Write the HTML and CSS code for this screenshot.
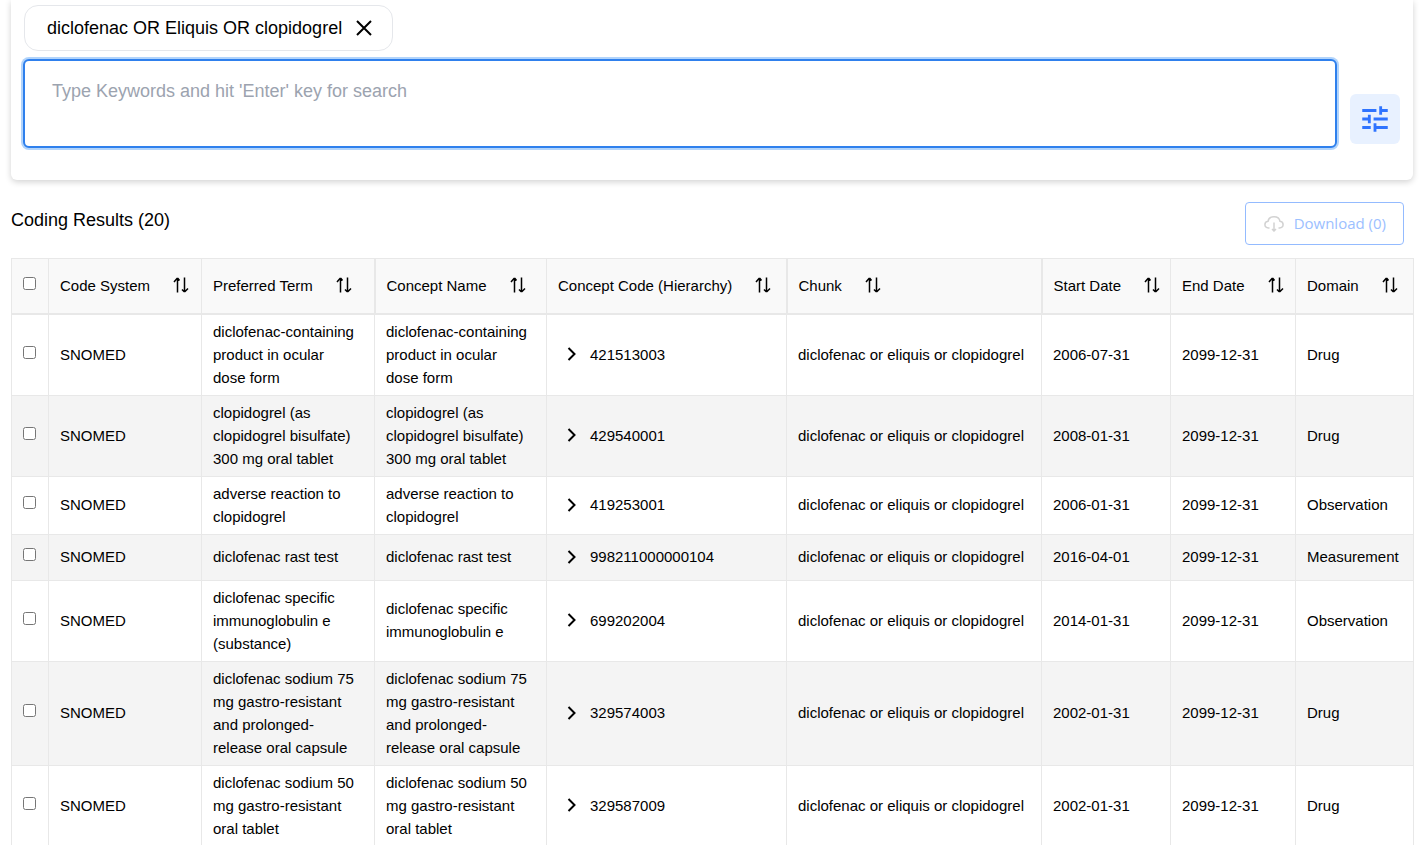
FILE: index.html
```html
<!DOCTYPE html>
<html lang="en">
<head>
  <meta charset="UTF-8">
  <title>Coding Results</title>
  <link rel="stylesheet" href="styles.css">
</head>
<body>

  <svg class="sprite" aria-hidden="true">
    <symbol id="sort" viewBox="0 0 16 16">
      <path d="M4.500 15.500V1.500M1 5 4 1.500H5L6.500 3.500M11.500 .5V14.500M9 12.500 11 14.500H12L15 11.500"/>
    </symbol>
    <symbol id="chevron" viewBox="0 0 10 16">
      <path d="M1.500 2 7.500 8 1.500 14"/>
    </symbol>
  </svg>

  <section class="search-card">
    <div class="chip">
      <span>diclofenac OR Eliquis OR clopidogrel</span>
      <button class="chip-close" aria-label="Remove">
        <svg viewBox="0 0 16 16" width="16" height="16"><path d="M1 1 15 15M15 1 1 15"/></svg>
      </button>
    </div>
    <div class="search-row">
      <textarea class="search-box" aria-label="Keywords" placeholder="Type Keywords and hit 'Enter' key for search"></textarea>
      <button class="filter-btn" aria-label="Filters">
        <svg viewBox="0 0 24 24" width="34" height="34"><path d="M3 17v2h6v-2H3zM3 5v2h10V5H3zm10 16v-2h8v-2h-8v-2h-2v6h2zM7 9v2H3v2h4v2h2V9H7zm14 4v-2H11v2h10zm-6-4h2V7h4V5h-4V3h-2v6z"/></svg>
      </button>
    </div>
  </section>

  <div class="results-bar">
    <h2>Coding Results (20)</h2>
    <button class="download-btn" disabled>
      <svg viewBox="0 0 20 16" width="20" height="16"><path d="M5.500 12H4.500C-.2 11.800-.2 6 4 5.300 5-.7 15-.7 16 5.300 20.200 6 20.200 11.800 15.500 12H14.500M10 6.500V15M8 13 10 15 12 13"/></svg>
      Download (0)
    </button>
  </div>

  <table class="results">
    <colgroup>
      <col class="col-check">
      <col class="col-system">
      <col class="col-term">
      <col class="col-name">
      <col class="col-code">
      <col class="col-chunk">
      <col class="col-start">
      <col class="col-end">
      <col class="col-domain">
    </colgroup>
    <thead>
      <tr>
        <th class="check"><input type="checkbox" aria-label="Select all"></th>
        <th><div class="head">Code System <button aria-label="Sort"><svg><use href="#sort"/></svg></button></div></th>
        <th><div class="head">Preferred Term <button aria-label="Sort"><svg><use href="#sort"/></svg></button></div></th>
        <th class="group"><div class="head">Concept Name <button aria-label="Sort"><svg><use href="#sort"/></svg></button></div></th>
        <th><div class="head">Concept Code (Hierarchy) <button aria-label="Sort"><svg><use href="#sort"/></svg></button></div></th>
        <th class="group"><div class="head">Chunk <button aria-label="Sort"><svg><use href="#sort"/></svg></button></div></th>
        <th class="group"><div class="head">Start Date <button aria-label="Sort"><svg><use href="#sort"/></svg></button></div></th>
        <th><div class="head">End Date <button aria-label="Sort"><svg><use href="#sort"/></svg></button></div></th>
        <th><div class="head">Domain <button aria-label="Sort"><svg><use href="#sort"/></svg></button></div></th>
      </tr>
    </thead>
    <tbody id="rows"></tbody>
  </table>

  <script src="script.js"></script>
</body>
</html>
```

FILE: styles.css
```css
* {
  box-sizing: border-box;
}

body {
  margin: 0;
  padding: 0 8px 0 11px;
  font-family: "Liberation Sans", Arial, sans-serif;
  font-size: 15px;
  line-height: 23px;
  color: #000;
  background: #fff;
}

button {
  padding: 0;
  border: none;
  background: none;
  color: inherit;
  font: inherit;
  cursor: pointer;
}

svg {
  display: block;
}

.sprite {
  display: none;
}

/* Search card */
.search-card {
  padding: 5px 13px 32px 12px;
  border-radius: 0 0 6px 6px;
  box-shadow: 0 2px 6px rgba(0, 0, 0, 0.18);
}

.chip {
  display: inline-flex;
  align-items: center;
  gap: 14px;
  height: 46px;
  margin-left: 1px;
  padding: 0 20px 0 22px;
  border: 1px solid #e5e7eb;
  border-radius: 14px;
  font-size: 18px;
}

.chip-close svg {
  fill: none;
  stroke: #000;
  stroke-width: 2;
}

.search-row {
  display: flex;
  align-items: flex-end;
  gap: 13px;
  margin-top: 8px;
}

.search-box {
  flex: 1;
  height: 89px;
  padding: 18px 27px;
  border: 2px solid #2f80ed;
  border-radius: 6px;
  outline: none;
  box-shadow: 0 0 0 2px #b2d4fb;
  resize: none;
  font-family: inherit;
  font-size: 18px;
  line-height: 24px;
}

.search-box::placeholder {
  color: #9ca3af;
}

.filter-btn {
  display: flex;
  align-items: center;
  justify-content: center;
  width: 50px;
  height: 50px;
  margin-bottom: 4px;
  border-radius: 6px;
  background: #e8f1ff;
}

.filter-btn svg {
  fill: #2f74ff;
}

/* Title and download */
.results-bar {
  display: flex;
  justify-content: space-between;
  align-items: flex-start;
  padding: 22px 9px 13px 0;
}

h2 {
  margin: 6px 0 0;
  font-size: 18px;
  line-height: 24px;
  font-weight: normal;
}

.download-btn {
  display: flex;
  align-items: center;
  gap: 10px;
  height: 43px;
  padding: 0 17px 0 18px;
  border: 1px solid #94bbff;
  border-radius: 4px;
  color: #9cc0ff;
  font-family: "Open Sans", "Noto Sans", sans-serif;
}

.download-btn svg {
  fill: none;
  stroke: #d2d2d2;
  stroke-width: 1.5;
}

/* Results table */
.results {
  width: 100%;
  table-layout: fixed;
  border-collapse: collapse;
}

.col-check { width: 37px; }
.col-system { width: 153px; }
.col-term { width: 173px; }
.col-name { width: 172px; }
.col-code { width: 240px; }
.col-chunk { width: 255px; }
.col-start { width: 129px; }
.col-end { width: 125px; }
.col-domain { width: 118px; }

th,
td {
  padding: 5px 10px 6px 11px;
  border: 1px solid #e8e8e8;
  font-weight: normal;
  text-align: left;
}

thead tr {
  height: 55px;
  background: #f9f9f9;
}

th {
  border-bottom-width: 2px;
  white-space: nowrap;
}

.group {
  border-left-width: 2px;
}

tbody tr {
  height: 46px;
}

tbody tr:nth-child(even) {
  background: #f4f4f4;
}

.term {
  padding-right: 15px;
}

.check {
  padding-right: 0;
}

.check input {
  display: block;
  width: 13px;
  height: 13px;
  margin: 0 0 4px;
}

.head {
  display: flex;
  align-items: center;
  gap: 23px;
}

.head svg {
  width: 16px;
  height: 16px;
  fill: none;
  stroke: #000;
  stroke-width: 1.5;
}

.code {
  display: flex;
  align-items: center;
  gap: 13px;
  padding-left: 9px;
}

.code svg {
  width: 10px;
  height: 16px;
  fill: none;
  stroke: #000;
  stroke-width: 2;
}
```

FILE: script.js
```js
const chunk = "diclofenac or eliquis or clopidogrel";

const results = [
  { term: "diclofenac-containing product in ocular dose form", code: "421513003", start: "2006-07-31", domain: "Drug" },
  { term: "clopidogrel (as clopidogrel bisulfate) 300 mg oral tablet", code: "429540001", start: "2008-01-31", domain: "Drug" },
  { term: "adverse reaction to clopidogrel", code: "419253001", start: "2006-01-31", domain: "Observation" },
  { term: "diclofenac rast test", code: "998211000000104", start: "2016-04-01", domain: "Measurement" },
  { term: "diclofenac specific immunoglobulin e (substance)", name: "diclofenac specific immunoglobulin e", code: "699202004", start: "2014-01-31", domain: "Observation" },
  { term: "diclofenac sodium 75 mg gastro-resistant and prolonged-release oral capsule", code: "329574003", start: "2002-01-31", domain: "Drug" },
  { term: "diclofenac sodium 50 mg gastro-resistant oral tablet", code: "329587009", start: "2002-01-31", domain: "Drug" }
];

document.getElementById("rows").innerHTML = results.map(r => `
  <tr>
    <td class="check"><input type="checkbox" aria-label="Select ${r.code}"></td>
    <td>SNOMED</td>
    <td class="term">${r.term}</td>
    <td class="term">${r.name || r.term}</td>
    <td><div class="code"><button aria-label="Expand"><svg><use href="#chevron"/></svg></button>${r.code}</div></td>
    <td>${chunk}</td>
    <td>${r.start}</td>
    <td>2099-12-31</td>
    <td>${r.domain}</td>
  </tr>
`).join("");
```
